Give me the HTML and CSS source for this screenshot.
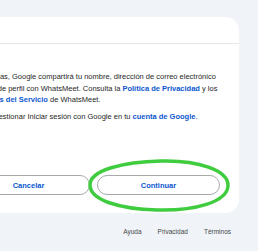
FILE: index.html
```html
<!DOCTYPE html>
<html lang="es">
<head>
<meta charset="utf-8">
<link rel="stylesheet" href="styles.css">
</head>
<body>
<div class="page">
  <div class="card">
    <div class="card-head"></div>
    <div class="card-body">
      <p class="txt">
        <span class="line">Si continúas, Google compartirá tu nombre, dirección de correo electrónico</span>
        <span class="line l2">y tu foto de perfil con WhatsMeet. Consulta la <a class="lnk">Política de Privacidad</a> y los</span>
        <span class="line l3"><a class="lnk">Términos del Servicio</a> de WhatsMeet.</span>
      </p>
      <p class="txt txt2">
        <span class="line">Puedes gestionar Iniciar sesión con Google en tu <a class="lnk">cuenta de Google</a>.</span>
      </p>
    </div>
    <div class="actions">
      <button class="btn">Cancelar</button>
      <button class="btn">Continuar</button>
    </div>
  </div>
  <div class="footer">
    <a class="flink">Ayuda</a>
    <a class="flink">Privacidad</a>
    <a class="flink">Términos</a>
  </div>
  <svg class="mark" width="150" height="56" viewBox="0 0 150 56">
    <path d="M76 3 C112 2 144 12 143 28 C142 44 110 53 72 52 C34 51 5 42 5 27 C5 12 38 4 76 3 Z" fill="none" stroke="#3fcc3f" stroke-width="3.5"/>
  </svg>
</div>
</body>
</html>
```

FILE: styles.css
```css
html, body {
  margin: 0;
  padding: 0;
}
body {
  background: #f0f4f9;
  width: 258px;
  height: 251px;
  overflow: hidden;
  font-family: "Liberation Sans", Arial, sans-serif;
  color: #1f1f1f;
}
.page {
  position: relative;
  width: 258px;
  height: 251px;
  padding-top: 17px;
  box-sizing: border-box;
}
.card {
  background: #ffffff;
  margin-left: -200px;
  width: 439px;
  border-radius: 14px;
  padding-bottom: 18px;
}
.card-head {
  height: 26px;
  border-bottom: 1px solid #e6e6e6;
}
.card-body {
  padding-top: 27px;
}
.txt {
  margin: 0 0 0 167px;
  font-size: 7.5px;
  line-height: 11.5px;
}
.line {
  display: block;
  white-space: nowrap;
}
.l2 {
  padding-left: 2px;
}
.l3 {
  padding-left: 3px;
}
.txt2 {
  margin-top: 5px;
}
.lnk {
  color: #0b57d0;
  font-weight: bold;
}
.actions {
  display: flex;
  justify-content: flex-end;
  gap: 7px;
  padding-right: 19px;
  margin-top: 53px;
}
.btn {
  width: 123px;
  height: 20px;
  border: 1px solid #a8a8a8;
  border-radius: 10px;
  background: #fff;
  color: #0b57d0;
  font-family: "Liberation Sans", Arial, sans-serif;
  font-size: 7.5px;
  font-weight: bold;
  padding: 0;
}
.footer {
  display: flex;
  justify-content: flex-end;
  gap: 16px;
  padding-right: 27px;
  margin-top: 15px;
}
.flink {
  font-size: 6.5px;
  color: #444746;
}
.mark {
  position: absolute;
  left: 85px;
  top: 158px;
}
```
